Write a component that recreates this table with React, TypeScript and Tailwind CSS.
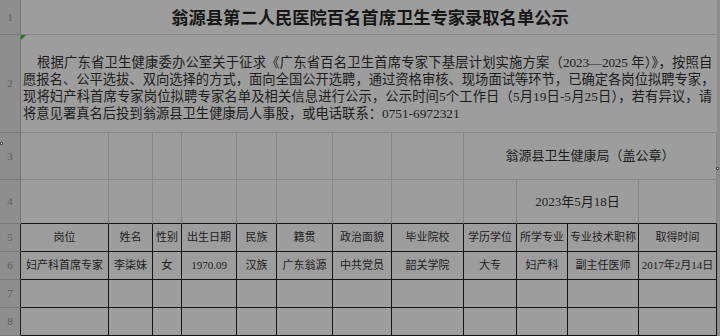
import React from 'react';

const serif = "font-['Liberation_Serif','Noto_Sans_CJK_SC',serif]";

const headers = ['岗位', '姓名', '性别', '出生日期', '民族', '籍贯', '政治面貌', '毕业院校', '学历学位', '所学专业', '专业技术职称', '取得时间'];
const person = ['妇产科首席专家', '李柒妹', '女', '1970.09', '汉族', '广东翁源', '中共党员', '韶关学院', '大专', '妇产科', '副主任医师', '2017年2月14日'];

function RowHead({ n, table }: { n: number; table?: boolean }) {
  return (
    <div
      className={`flex items-center justify-center bg-[#8e8e8e] border-b border-b-[#7a7a7a] border-r text-[11px] text-[#5a5a5a] ${serif} ${
        table ? 'border-r-[#222]' : 'border-r-[#747474]'
      }`}
    >
      {n}
    </div>
  );
}

// plain grey grid cell
function G({ children, span, bottom }: { children?: React.ReactNode; span?: string; bottom?: boolean }) {
  return (
    <div
      className={`flex items-center justify-center border-r border-r-[#878787] border-b ${
        bottom ? 'border-b-[#151515]' : 'border-b-[#878787]'
      } ${span ?? ''}`}
    >
      {children}
    </div>
  );
}

// black bordered table cell
function T({ children }: { children?: React.ReactNode }) {
  return (
    <div className="flex items-center justify-center border-r border-b border-[#151515] text-[11px] text-[#1e1e1e] whitespace-nowrap">
      {children}
    </div>
  );
}

export default function App() {
  return (
    <div className="w-[720px] h-[336px] overflow-hidden bg-[#9d9d9d] relative">
      <div className="grid grid-cols-[21px_88px_44px_29px_55px_40px_56px_59px_72px_53px_51px_71px_78px_3px] grid-rows-[35px_98px_47px_44px_28px_28px_28px_28px]">
        <div className="col-start-14 row-start-1 row-span-8 bg-[#8d8d8d]" />

        {/* row 1 - title */}
        <RowHead n={1} />
        <div className="col-span-12 flex items-center justify-center border-b border-b-[#878787]">
          <span className="font-['Noto_Sans_CJK_SC',sans-serif] font-bold text-[17.3px] text-[#161616] pl-[2px]">
            翁源县第二人民医院百名首席卫生专家录取名单公示
          </span>
        </div>

        {/* row 2 - notice */}
        <RowHead n={2} />
        <div className={`relative col-span-12 border-b border-b-[#878787] pl-[2px] pr-[5px] pt-[19px] text-[13.3px] leading-[17px] text-[#1c1c1c] ${serif}`}>
          <div className="absolute left-0 top-0 w-0 h-0 border-t-[5px] border-t-[#1f7a1f] border-r-[5px] border-r-transparent" />
          <div className="pl-[14px] whitespace-nowrap [text-align-last:justify] text-justify tracking-[-0.2px]">
            根据广东省卫生健康委办公室关于征求《广东省百名卫生首席专家下基层计划实施方案（2023—2025 年）》，按照自
          </div>
          <div className="whitespace-nowrap [text-align-last:justify] text-justify">
            愿报名、公平选拔、双向选择的方式，面向全国公开选聘，通过资格审核、现场面试等环节，已确定各岗位拟聘专家，
          </div>
          <div className="whitespace-nowrap [text-align-last:justify] text-justify">
            现将妇产科首席专家岗位拟聘专家名单及相关信息进行公示，公示时间5个工作日（5月19日-5月25日），若有异议，请
          </div>
          <div className="whitespace-nowrap">将意见署真名后投到翁源县卫生健康局人事股，或电话联系：0751-6972321</div>
        </div>

        {/* row 3 - stamp */}
        <RowHead n={3} />
        {Array.from({ length: 8 }).map((_, i) => (
          <G key={i} />
        ))}
        <G span="col-span-4">
          <span className={`text-[13px] text-[#1e1e1e] ${serif}`}>翁源县卫生健康局（盖公章）</span>
        </G>

        {/* row 4 - date */}
        <RowHead n={4} />
        {Array.from({ length: 9 }).map((_, i) => (
          <G key={i} bottom />
        ))}
        <G span="col-span-2" bottom>
          <span className={`text-[13px] text-[#1e1e1e] ${serif}`}>2023年5月18日</span>
        </G>
        <G bottom />

        {/* row 5 - headers */}
        <RowHead n={5} table />
        {headers.map((h) => (
          <T key={h}>
            <span className={serif}>{h}</span>
          </T>
        ))}

        {/* row 6 - data */}
        <RowHead n={6} table />
        {person.map((v, i) => (
          <T key={i}>
            <span className={serif}>{v}</span>
          </T>
        ))}

        <RowHead n={7} table />
        {headers.map((h) => (
          <T key={h} />
        ))}

        <RowHead n={8} table />
        {headers.map((h) => (
          <T key={h} />
        ))}
      </div>

      {/* selection handles */}
      <div className="absolute left-0 top-[142px] w-[3px] h-[3px] bg-white border border-[#555]" />
      <div className="absolute left-[716px] top-[167px] w-[3px] h-[3px] bg-white border border-[#555]" />
    </div>
  );
}
